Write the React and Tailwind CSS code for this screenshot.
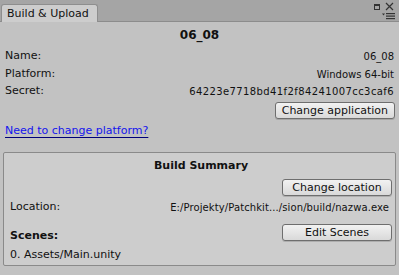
import React from "react";

function Btn({ children, className = "" }) {
  return (
    <div
      className={
        "h-[17px] flex items-center justify-center rounded-[3px] border border-[#6e6e6e] bg-gradient-to-b from-[#f2f2f2] to-[#d9d9d9] shadow-[0_1px_0_rgba(0,0,0,0.15)] text-[11px] leading-none text-[#111] " +
        className
      }
    >
      {children}
    </div>
  );
}

export default function App() {
  return (
    <div className="w-[399px] h-[275px] bg-[#c2c2c2] overflow-hidden font-['DejaVu_Sans',sans-serif] text-[11px] text-[#111]">
      {/* header */}
      <div className="relative h-[22px] bg-[#a5a5a5] border-b border-[#8c8c8c] flex items-end">
        <div className="ml-[1px] -mb-px h-[18px] w-[97px] bg-[#cdcdcd] border border-b-0 border-[#8e8e8e] rounded-t-[3px] pl-[5px] leading-[17px] text-[11px] text-[#111]">
          Build &amp; Upload
        </div>
        <svg className="absolute left-[373px] top-[2px]" width="24" height="18" viewBox="0 0 24 18">
          <rect x="1.5" y="2.5" width="5" height="5" fill="none" stroke="#333" strokeWidth="1" />
          <rect x="1" y="2" width="6" height="2" fill="#333" />
          <path d="M13 1 L20 8 M20 1 L13 8" stroke="#333" strokeWidth="1.2" />
          <path d="M9 11.5 L12 11.5 L10.5 13.5 Z" fill="#333" />
          <rect x="13" y="11" width="9" height="1.2" fill="#333" />
          <rect x="13" y="13.5" width="9" height="1.2" fill="#333" />
          <rect x="13" y="16" width="9" height="1.2" fill="#333" />
        </svg>
      </div>

      {/* content */}
      <div className="px-[5px]">
        <div className="mt-[2px] h-[22px] flex items-center justify-center font-bold text-[12px]">06_08</div>
        <div className="mt-[2px] h-[17px] flex items-center justify-between">
          <span>Name:</span>
          <span className="text-[10px]">06_08</span>
        </div>
        <div className="h-[18px] flex items-center justify-between">
          <span>Platform:</span>
          <span className="text-[10px]">Windows 64-bit</span>
        </div>
        <div className="h-[17px] flex items-center justify-between">
          <span>Secret:</span>
          <span className="text-[10px] tracking-[0.4px]">64223e7718bd41f2f84241007cc3caf6</span>
        </div>
        <div className="mt-[2px] flex justify-end -mr-[1px]">
          <Btn className="px-[6px]">Change application</Btn>
        </div>
        <div className="h-[20px] mt-[2px] flex items-center">
          <span className="text-[#1414ee] underline decoration-[#00007a] underline-offset-[3px]">
            Need to change platform?
          </span>
        </div>
      </div>

      {/* build summary box */}
      <div className="mt-[11px] ml-[3px] w-[393px] h-[114px] bg-[#cdcdcd] border border-[#8a8a8a] rounded-[2px] pl-[6px] pr-[3px]">
        <div className="h-[26px] pt-[1px] flex items-center justify-center font-bold text-[11px]">Build Summary</div>
        <div className="flex justify-end">
          <Btn className="w-[110px]">Change location</Btn>
        </div>
        <div className="h-[22px] flex items-center justify-between">
          <span>Location:</span>
          <span className="text-[10px] tracking-[0.1px] pr-[3px]">E:/Projekty/Patchkit.../sion/build/nazwa.exe</span>
        </div>
        <div className="mt-[6px] h-[18px] flex items-end justify-between">
          <span className="font-bold leading-none mb-[1px]">Scenes:</span>
          <Btn className="w-[110px] self-start">Edit Scenes</Btn>
        </div>
        <div className="mt-[3px] h-[20px] flex items-center">0. Assets/Main.unity</div>
      </div>
    </div>
  );
}
